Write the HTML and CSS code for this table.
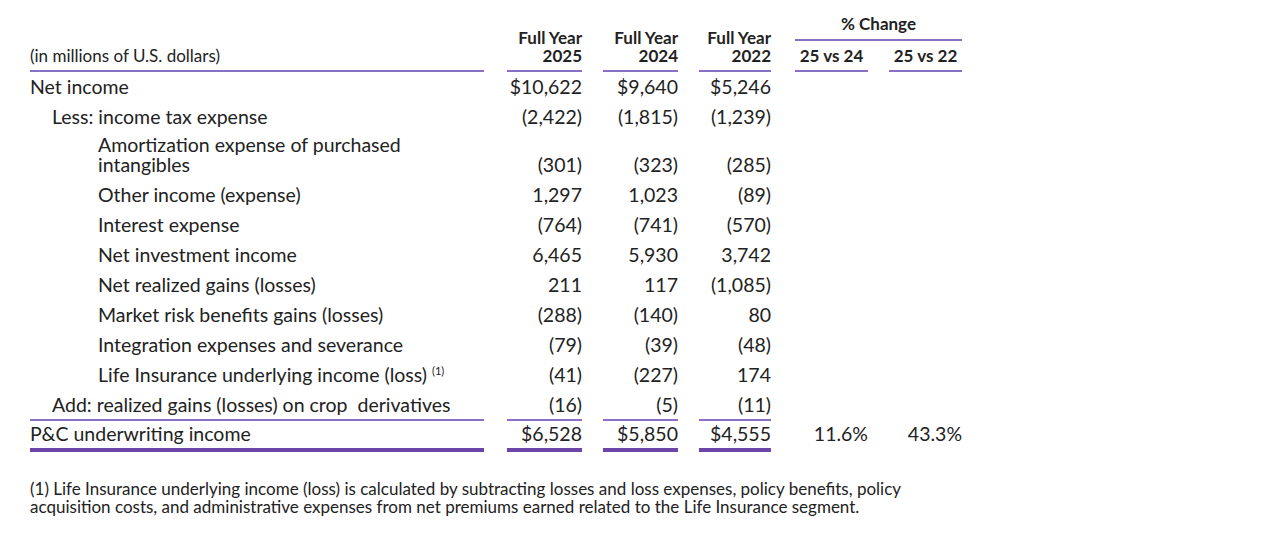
FILE: index.html
```html
<!DOCTYPE html>
<html>
<head>
<meta charset="utf-8">
<link rel="stylesheet" href="styles.css">
</head>
<body>
<div class="page">
<table class="fin">
  <colgroup>
    <col class="c-label"><col class="c1"><col class="c2"><col class="c3"><col class="c4"><col class="c5">
  </colgroup>
  <thead>
    <tr class="h1">
      <th class="lbl" rowspan="2"><div class="hl">(in millions of U.S. dollars)</div></th>
      <th class="num g23" rowspan="2"><div class="hl b">Full Year<br>2025</div></th>
      <th class="num g21" rowspan="2"><div class="hl b">Full Year<br>2024</div></th>
      <th class="num g21" rowspan="2"><div class="hl b">Full Year<br>2022</div></th>
      <th class="pct g24" colspan="2"><div class="pch b">% Change</div></th>
    </tr>
    <tr class="h2">
      <th class="pc g24"><div class="hl b">25 vs 24</div></th>
      <th class="pc g21"><div class="hl b">25 vs 22</div></th>
    </tr>
  </thead>
  <tbody>
    <tr><td class="lbl i0">Net income</td><td class="num g23"><div>$10,622</div></td><td class="num g21"><div>$9,640</div></td><td class="num g21"><div>$5,246</div></td><td></td><td></td></tr>
    <tr><td class="lbl i1">Less: income tax expense</td><td class="num g23"><div>(2,422)</div></td><td class="num g21"><div>(1,815)</div></td><td class="num g21"><div>(1,239)</div></td><td></td><td></td></tr>
    <tr class="tall"><td class="lbl i2">Amortization expense of purchased<br>intangibles</td><td class="num g23"><div>(301)</div></td><td class="num g21"><div>(323)</div></td><td class="num g21"><div>(285)</div></td><td></td><td></td></tr>
    <tr><td class="lbl i2">Other income (expense)</td><td class="num g23"><div>1,297</div></td><td class="num g21"><div>1,023</div></td><td class="num g21"><div>(89)</div></td><td></td><td></td></tr>
    <tr><td class="lbl i2">Interest expense</td><td class="num g23"><div>(764)</div></td><td class="num g21"><div>(741)</div></td><td class="num g21"><div>(570)</div></td><td></td><td></td></tr>
    <tr><td class="lbl i2">Net investment income</td><td class="num g23"><div>6,465</div></td><td class="num g21"><div>5,930</div></td><td class="num g21"><div>3,742</div></td><td></td><td></td></tr>
    <tr><td class="lbl i2">Net realized gains (losses)</td><td class="num g23"><div>211</div></td><td class="num g21"><div>117</div></td><td class="num g21"><div>(1,085)</div></td><td></td><td></td></tr>
    <tr><td class="lbl i2">Market risk benefits gains (losses)</td><td class="num g23"><div>(288)</div></td><td class="num g21"><div>(140)</div></td><td class="num g21"><div>80</div></td><td></td><td></td></tr>
    <tr><td class="lbl i2">Integration expenses and severance</td><td class="num g23"><div>(79)</div></td><td class="num g21"><div>(39)</div></td><td class="num g21"><div>(48)</div></td><td></td><td></td></tr>
    <tr><td class="lbl i2">Life Insurance underlying income (loss) <sup>(1)</sup></td><td class="num g23"><div>(41)</div></td><td class="num g21"><div>(227)</div></td><td class="num g21"><div>174</div></td><td></td><td></td></tr>
    <tr class="pre"><td class="lbl i1"><div>Add: realized gains (losses) on crop&nbsp; derivatives</div></td><td class="num g23"><div>(16)</div></td><td class="num g21"><div>(5)</div></td><td class="num g21"><div>(11)</div></td><td></td><td></td></tr>
    <tr class="total"><td class="lbl i0"><div>P&amp;C underwriting income</div></td><td class="num g23"><div>$6,528</div></td><td class="num g21"><div>$5,850</div></td><td class="num g21"><div>$4,555</div></td><td class="pv g24"><div>11.6%</div></td><td class="pv g21"><div>43.3%</div></td></tr>
  </tbody>
</table>
<p class="note">(1) Life Insurance underlying income (loss) is calculated by subtracting losses and loss expenses, policy benefits, policy<br>acquisition costs, and administrative expenses from net premiums earned related to the Life Insurance segment.</p>
</div>
</body>
</html>
```

FILE: styles.css
```css
html, body {
  margin: 0;
  padding: 0;
  background: #ffffff;
}
body {
  font-family: Lato, "Open Sans", sans-serif;
  color: #222222;
}
.page {
  padding: 15px 0 0 30px;
}
.fin {
  border-collapse: collapse;
  table-layout: fixed;
  width: 932px;
}
.c-label { width: 454px; }
.c1 { width: 98px; }
.c2 { width: 96px; }
.c3 { width: 93px; }
.c4 { width: 97px; }
.c5 { width: 94px; }
.fin th, .fin td {
  padding: 0;
  font-weight: normal;
}
.g23 { padding-left: 23px !important; }
.g21 { padding-left: 21px !important; }
.g24 { padding-left: 24px !important; }

/* header */
.fin thead th {
  font-size: 17px;
  line-height: 18px;
  vertical-align: bottom;
}
.fin thead .hl {
  border-bottom: 2px solid #8a70c2;
  padding-bottom: 5px;
}
.fin thead .lbl { text-align: left; }
.fin thead .num { text-align: right; }
.fin thead .b { font-weight: 700; }
.pch {
  text-align: center;
  border-bottom: 2px solid #8a70c2;
  padding-bottom: 6px;
  margin-bottom: 6px;
}
.pc .hl { text-align: center; }

/* body */
.fin tbody td {
  font-size: 19.5px;
  line-height: 20px;
  padding-top: 5px;
  padding-bottom: 5px;
  vertical-align: top;
}
.fin tbody tr.tall td {
  padding-top: 3px;
}
.fin tbody tr.tall td.num {
  vertical-align: bottom;
}
.fin tbody td.num { text-align: right; }
.i0 { padding-left: 0; }
.i1 { padding-left: 22px !important; }
.i2 { padding-left: 68px !important; }
sup {
  font-size: 11px;
  line-height: 0;
  vertical-align: 7px;
}

.fin tbody tr.pre td { padding-bottom: 0; }
.fin tbody tr.pre td.lbl { padding-left: 0 !important; }
.fin tbody tr.pre td.lbl div { padding-left: 22px; }
.fin tbody tr.pre td.lbl div,
.fin tbody tr.pre td.num div {
  padding-bottom: 4px;
  border-bottom: 2px solid #8a70c2;
}
.fin tbody tr.total td { padding-top: 0; padding-bottom: 0; }
.fin tbody tr.total td.lbl div,
.fin tbody tr.total td.num div {
  padding-top: 3px;
  padding-bottom: 4px;
  border-bottom: 4px solid #6a47a6;
}
.fin tbody tr.total td.pv div {
  padding-top: 3px;
  text-align: right;
}

.note {
  margin: 28px 0 0 0;
  font-size: 17px;
  line-height: 18px;
  color: #222222;
}
```
